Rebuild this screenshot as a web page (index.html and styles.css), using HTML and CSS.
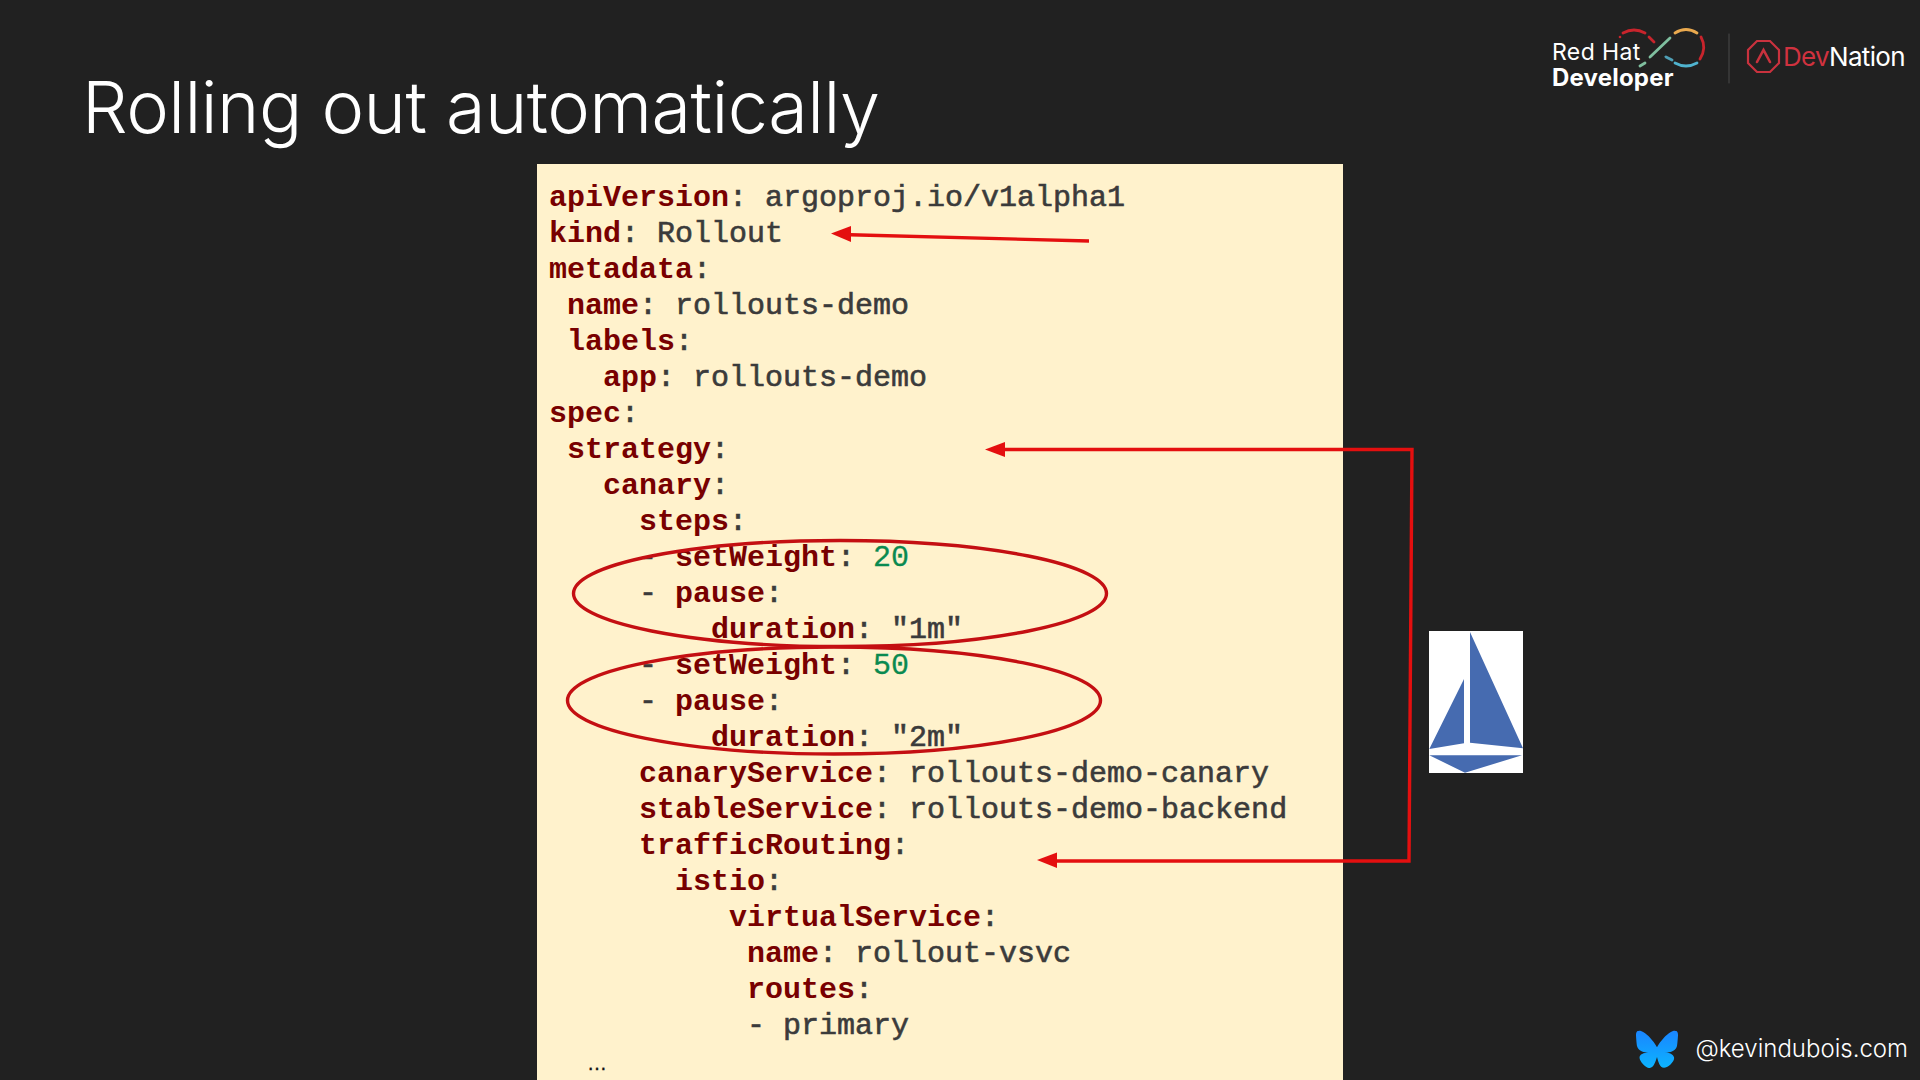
FILE: index.html
```html
<!DOCTYPE html>
<html lang="en">
<head>
<meta charset="utf-8">
<title>Rolling out automatically</title>
<link rel="stylesheet" href="styles.css">
</head>
<body>
<div class="slide">
  <header class="top">
    <h1 class="title">Rolling out automatically</h1>
    <svg class="brand" viewBox="1550 20 360 80" width="360" height="80" aria-label="Red Hat Developer, DevNation">
      <g fill="none" stroke-width="2.8" stroke-linecap="round">
        <path d="M1623 33Q1634 27 1645 33M1649 37L1654 42" stroke="#c8242c"/>
        <circle cx="1620" cy="37" r="1.3" fill="#c8242c" stroke="none"/>
        <path d="M1670 38L1650 57" stroke="#7fbf9f"/>
        <path d="M1645 63L1640 66" stroke="#7fbf9f"/>
        <path d="M1675 33Q1686 26 1697 33" stroke="#eaa94e"/>
        <path d="M1701 37Q1707 48 1700 59" stroke="#c8242c"/>
        <path d="M1675 63Q1686 69 1697 63" stroke="#4fb3cf"/>
        <path d="M1666 57L1672 60" stroke="#4f9fb5"/>
        <path d="M1729 34V83" stroke="#4a4a4a" stroke-width="1"/>
        <path d="M1757 41L1770 41L1779 50L1779 63L1770 72L1757 72L1748 63L1748 50Z" stroke="#c9323e" stroke-width="2.2"/>
        <path d="M1757 62L1763.500 50L1770 62" stroke="#c9323e" stroke-width="2.6"/>
      </g>
      <text class="rh" x="1552" y="60">Red Hat</text>
      <text class="dev" x="1552" y="86">Developer</text>
      <text class="dn" x="1783" y="66"><tspan class="dn-red">Dev</tspan>Nation</text>
    </svg>
  </header>
  <main class="stage">
<pre class="code"><b>apiVersion</b>: argoproj.io/v1alpha1
<b>kind</b>: Rollout
<b>metadata</b>:
 <b>name</b>: rollouts-demo
 <b>labels</b>:
   <b>app</b>: rollouts-demo
<b>spec</b>:
 <b>strategy</b>:
   <b>canary</b>:
     <b>steps</b>:
     - <b>setWeight</b>: <i>20</i>
     - <b>pause</b>:
         <b>duration</b>: "1m"
     - <b>setWeight</b>: <i>50</i>
     - <b>pause</b>:
         <b>duration</b>: "2m"
     <b>canaryService</b>: rollouts-demo-canary
     <b>stableService</b>: rollouts-demo-backend
     <b>trafficRouting</b>:
       <b>istio</b>:
          <b>virtualService</b>:
           <b>name</b>: rollout-vsvc
           <b>routes</b>:
           - primary
<span class="more">…</span></pre>
    <svg class="sail" viewBox="0 0 94 142" width="94" height="142" aria-label="Istio logo">
      <rect width="94" height="142" fill="#fff"/>
      <path d="M41 1L94 117.3L41 111.7ZM35 48V112.3L.3 118ZM.3 124.3H93L36 141.700Z" fill="#466bb0"/>
    </svg>
    <div class="handle">
      <svg class="bsky" viewBox="0 0 24 21.6" width="42" height="38" aria-hidden="true">
        <defs><linearGradient id="b" x1="0" y1="0" x2="0" y2="1"><stop offset="0" stop-color="#1a85ff"/><stop offset="1" stop-color="#0cb4ff"/></linearGradient></defs>
        <path transform="translate(0 -1)" fill="url(#b)" d="M12 10.8c-1.087-2.114-4.046-6.053-6.798-7.995C2.566.944 1.561 1.266.902 1.565.139 1.908 0 3.08 0 3.768c0 .69.378 5.65.624 6.479.815 2.736 3.713 3.66 6.383 3.364.136-.02.275-.039.415-.056-.138.022-.276.04-.415.056-3.912.58-7.387 2.005-2.83 7.078 5.013 5.19 6.87-1.113 7.823-4.308.953 3.195 2.05 9.271 7.733 4.308 4.267-4.308 1.172-6.498-2.74-7.078a8.741 8.741 0 0 1-.415-.056c.14.017.279.036.415.056 2.67.297 5.568-.628 6.383-3.364.246-.828.624-5.79.624-6.479 0-.688-.139-1.86-.902-2.203-.659-.299-1.664-.62-4.3 1.24C16.046 4.748 13.087 8.687 12 10.8Z"/>
      </svg>
      <span>@kevindubois.com</span>
    </div>
  </main>
  <svg class="marks" viewBox="0 0 1920 1080" width="1920" height="1080" aria-hidden="true">
    <g fill="none" stroke="#c40f12" stroke-width="3.4">
      <ellipse cx="840" cy="593.500" rx="266.500" ry="53"/>
      <ellipse cx="834" cy="700.500" rx="266.500" ry="53.500"/>
    </g>
    <g fill="none" stroke="#e40f0f" stroke-width="3.4">
      <path d="M850 234.700L1089 241"/>
      <path d="M1002 449.500H1412L1409 861H1054"/>
    </g>
    <g fill="#e40f0f">
      <path d="M831 233.500L851 226V242Z"/>
      <path d="M985 449.500L1005 442V457Z"/>
      <path d="M1037 860L1057 852.500V868Z"/>
    </g>
  </svg>
</div>
</body>
</html>
```
FILE: styles.css
```css
html, body {
  margin: 0;
  padding: 0;
  background: #212121;
}
.slide {
  position: relative;
  width: 1920px;
  height: 1080px;
  overflow: hidden;
  background: #212121;
  display: flex;
  flex-direction: column;
}
.top {
  height: 164px;
  flex: none;
  display: flex;
  justify-content: space-between;
  align-items: flex-start;
  padding: 0 10px 0 82px;
  box-sizing: border-box;
}
.title {
  margin: 0;
  padding-top: 63px;
  font: 300 72px/88px Inter, sans-serif;
  letter-spacing: -.55px;
  color: #fff;
}
.brand {
  flex: none;
  margin-top: 20px;
}
.rh, .dev, .dn {
  font-family: Inter, sans-serif;
  fill: #fff;
}
.rh { font-size: 23px; font-weight: 400; letter-spacing: .4px; }
.dev { font-size: 24px; font-weight: 700; letter-spacing: .2px; }
.dn { font-size: 26px; font-weight: 400; letter-spacing: -.7px; }
.dn-red { fill: #d0323f; }
.stage {
  flex: 1;
  display: flex;
  padding-left: 537px;
  min-height: 0;
}
.code {
  margin: 0;
  width: 806px;
  height: 916px;
  flex: none;
  box-sizing: border-box;
  padding: 16px 0 0 12px;
  background: #fff2cc;
  color: #3b3b3b;
  font: 400 30px/36px "Liberation Mono", monospace;
  -webkit-text-stroke: .6px #3b3b3b;
  overflow: hidden;
}
.code b {
  font-weight: 700;
  color: #780000;
  -webkit-text-stroke: 0;
}
.code i {
  font-style: normal;
  color: #0a8a50;
  -webkit-text-stroke: .3px #0a8a50;
}
.more {
  padding-left: 38px;
  font: 400 20px/36px "Liberation Sans", sans-serif;
  color: #111;
  -webkit-text-stroke: .3px #111;
}
.sail {
  flex: none;
  margin: 467px 0 0 86px;
}
.handle {
  margin: auto 12px 12px auto;
  display: flex;
  align-items: center;
  gap: 17px;
  font: 300 24px/38px Inter, sans-serif;
  color: #fff;
}
.bsky { flex: none; }
.marks {
  position: absolute;
  left: 0;
  top: 0;
  pointer-events: none;
}
```
